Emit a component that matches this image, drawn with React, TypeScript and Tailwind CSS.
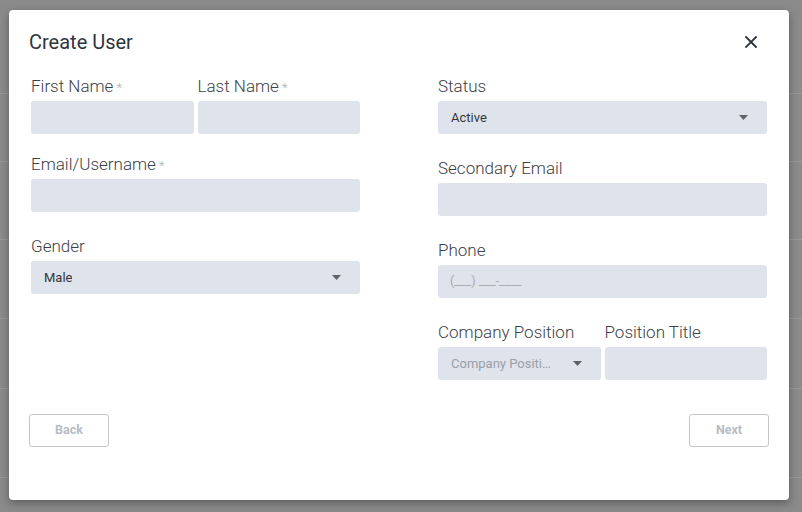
import type { JSX, ReactNode } from 'react';

// rows of the page that sits behind the dimmed overlay
const BG_ROWS = [94, 68, 78, 79, 70, 89];

function Caret(): JSX.Element {
  return (
    <svg width="9" height="5" viewBox="0 0 9 5" className="shrink-0">
      <path d="M0 0 L9 0 L4.5 5 z" fill="#5f6368" />
    </svg>
  );
}

function Label({ children, required }: { children: ReactNode; required?: boolean }): JSX.Element {
  return (
    <div className="h-5 whitespace-nowrap text-[17px] font-light leading-[21px] text-[#3c4048]">
      {children}
      {required && <span className="ml-[3px] text-[13px] text-[#a9adb4]">*</span>}
    </div>
  );
}

function Input({ placeholder }: { placeholder?: string }): JSX.Element {
  return (
    <div className="mt-[5px] flex h-[33px] items-center rounded-[3px] bg-[#dfe3eb] pl-3 text-[12.5px] text-[#a7abb2]">
      {placeholder}
    </div>
  );
}

function Select({ value, muted }: { value: string; muted?: boolean }): JSX.Element {
  return (
    <div className="mt-[5px] flex h-[33px] items-center justify-between gap-2 rounded-[3px] bg-[#dfe3eb] pl-[13px] pr-[19px]">
      <span
        className={`truncate text-[13px] ${muted ? 'max-w-[101px] text-[#9a9fa7]' : 'text-[#33373d]'}`}
      >
        {value}
      </span>
      <Caret />
    </div>
  );
}

function Field({
  label,
  required,
  className = '',
  children,
}: {
  label: string;
  required?: boolean;
  className?: string;
  children: ReactNode;
}): JSX.Element {
  return (
    <div className={`flex min-w-0 flex-col ${className}`}>
      <Label required={required}>{label}</Label>
      {children}
    </div>
  );
}

function Button({ children }: { children: ReactNode }): JSX.Element {
  return (
    <button className="flex h-[33px] w-20 items-center justify-center rounded-[3px] border border-[#c3c6cb] bg-white text-[12.5px] font-bold text-[#b8bcc3]">
      {children}
    </button>
  );
}

export default function App(): JSX.Element {
  return (
    <div
      className="relative h-[512px] w-[802px] overflow-hidden bg-[#8b8b8b]"
      style={{ fontFamily: 'Roboto, "Noto Sans", sans-serif' }}
    >
      <div className="flex flex-col">
        {BG_ROWS.map((h, i) => (
          <div key={i} className="border-b border-[#9a9a9a]" style={{ height: h }} />
        ))}
      </div>

      <div className="absolute left-[9px] top-[10px] flex h-[490px] w-[780px] flex-col rounded-[4px] bg-white px-5 shadow-[0_3px_10px_rgba(0,0,0,0.35)]">
        <div className="flex items-center justify-between pt-[21px]">
          <h1 className="text-[20px] leading-[22px] text-[#2f3540]">Create User</h1>
          <svg width="12" height="12" viewBox="0 0 12 12" className="mr-3">
            <path d="M1 1 L11 11 M11 1 L1 11" stroke="#2b303a" strokeWidth="1.8" strokeLinecap="square" />
          </svg>
        </div>

        <div className="mt-[23px] grid grid-cols-2 gap-x-[78px] px-[2px]">
          <div className="flex flex-col">
            <div className="flex gap-1">
              <Field label="First Name" required className="flex-1">
                <Input />
              </Field>
              <Field label="Last Name" required className="flex-1">
                <Input />
              </Field>
            </div>
            <Field label="Email/Username" required className="mt-5">
              <Input />
            </Field>
            <Field label="Gender" className="mt-6">
              <Select value="Male" />
            </Field>
          </div>

          <div className="flex flex-col">
            <Field label="Status">
              <Select value="Active" />
            </Field>
            <Field label="Secondary Email" className="mt-6">
              <Input />
            </Field>
            <Field label="Phone" className="mt-6">
              <Input placeholder="(___) ___-____" />
            </Field>
            <div className="mt-6 flex gap-1">
              <Field label="Company Position" className="flex-1">
                <Select value="Company Position" muted />
              </Field>
              <Field label="Position Title" className="flex-1">
                <Input />
              </Field>
            </div>
          </div>
        </div>

        <div className="mt-[34px] flex justify-between">
          <Button>Back</Button>
          <Button>Next</Button>
        </div>
      </div>
    </div>
  );
}
